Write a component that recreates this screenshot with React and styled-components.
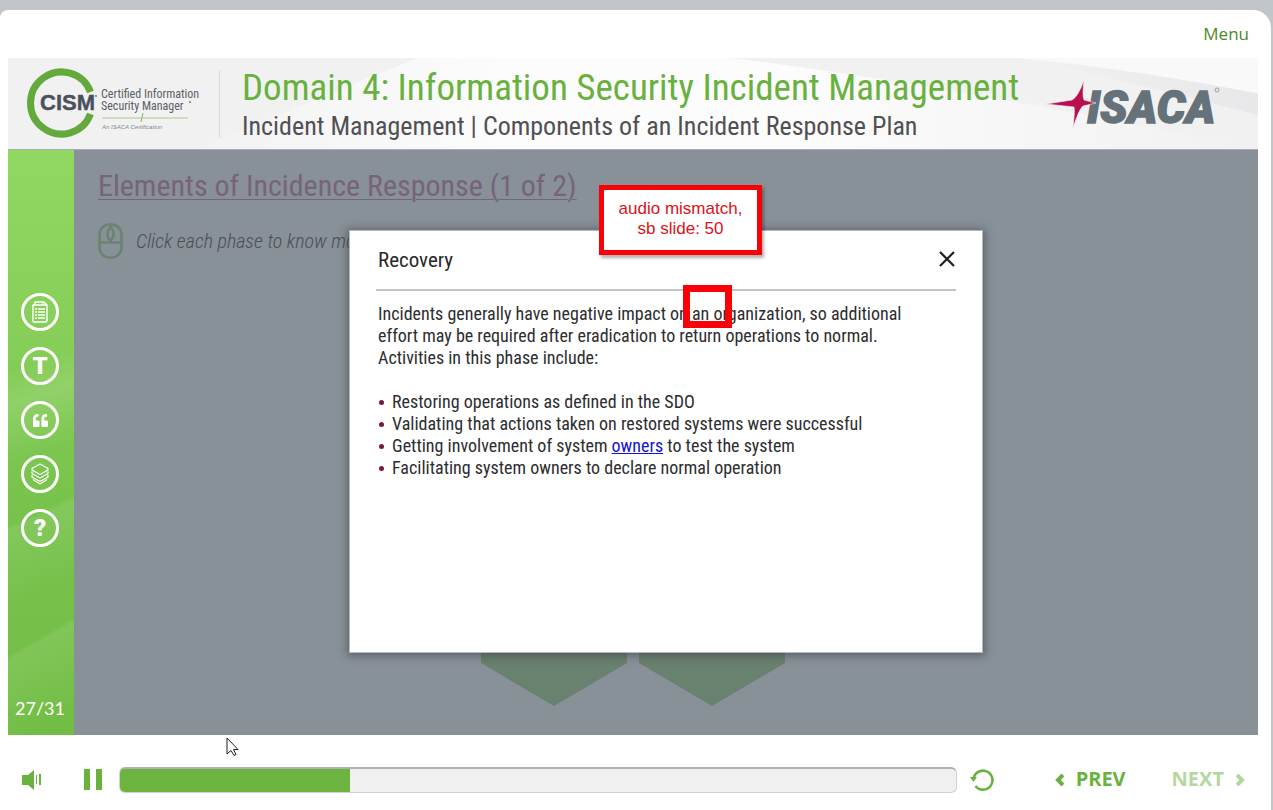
import React from "react";
import styled, { createGlobalStyle } from "styled-components";
import { FaQuoteLeft } from "react-icons/fa";

const GlobalStyle = createGlobalStyle`
  * { box-sizing: border-box; }
  body { margin: 0; background: #c1c6ca; font-family: "Roboto Condensed", "Arial Narrow", Roboto, sans-serif; }
  h1, h2, h3, p, ul { margin: 0; padding: 0; font-weight: 400; }
  button { border: 0; padding: 0; background: none; color: inherit; font: inherit; cursor: pointer; display: flex; align-items: center; justify-content: center; }
`;

const Player = styled.div`
  display: flex;
  flex-direction: column;
  min-height: calc(100vh - 10px);
  margin: 10px 2px 0 0;
  background: #fff;
  border-radius: 8px 18px 0 0;
  position: relative;
`;

const TopBar = styled.nav`
  height: 48px;
  display: flex;
  justify-content: flex-end;
  align-items: center;
  padding: 0 22px;
`;

const MenuLink = styled.a`
  font: 17px/24px "Open Sans", sans-serif;
  color: #4c8a2c;
  text-decoration: none;
`;

const Slide = styled.section`
  flex: 1;
  margin: 0 13px 0 8px;
  display: flex;
  flex-direction: column;
`;

const Banner = styled.header`
  height: 92px;
  display: flex;
  align-items: center;
  position: relative;
  background: #f1f1f2;
  border-bottom: 1px solid #a9abb5;
`;

const Swoosh = styled.svg`
  position: absolute;
  inset: 0;
  width: 100%;
  height: 100%;
`;

const CismLogo = styled.svg`
  position: relative;
  flex: none;
  width: 212px;
  height: 91px;
`;

const Titles = styled.div`
  position: relative;
  flex: 1;
  padding: 4px 0 0 22px;
  white-space: nowrap;
`;

const CourseTitle = styled.h1`
  font-size: 37px;
  line-height: 40px;
  color: #68b13f;
`;

const TopicTitle = styled.h2`
  font-size: 26px;
  line-height: 36px;
  color: #505052;
`;

const IsacaLogo = styled.svg`
  position: relative;
  flex: none;
  width: 180px;
  height: 60px;
  margin-right: 32px;
`;

const Content = styled.div`
  flex: 1;
  display: flex;
`;

const Sidebar = styled.aside`
  width: 66px;
  display: flex;
  flex-direction: column;
  align-items: center;
  padding: 143px 2px 14px 0;
  color: #fff;
  background:
    linear-gradient(150deg, transparent 81%, #ffffff18 82%, transparent 96%),
    linear-gradient(155deg, transparent 61%, #ffffff18 62%, transparent 75%),
    linear-gradient(160deg, transparent 36%, #ffffff20 42%, transparent 52%),
    linear-gradient(#90d862, #87cf58 30%, #77c34c 60%, #72bd45);
`;

const ToolList = styled.div`
  display: flex;
  flex-direction: column;
  gap: 16px;
`;

const ToolButton = styled.button`
  width: 38px;
  height: 38px;
  && { border: 3px solid #fff; }
  border-radius: 50%;
  && { font: 900 24px/32px Roboto, sans-serif; }
`;

const PageCount = styled.span`
  margin-top: auto;
  font: 18px/26px Lato, sans-serif;
`;

const Stage = styled.main`
  flex: 1;
  position: relative;
  display: flex;
  flex-direction: column;
  background: #889098;
  padding: 20px 24px 29px;
`;

const SlideTitle = styled.h2`
  font-size: 30px;
  line-height: 32px;
  color: #776477;
  text-decoration: underline;
  text-decoration-thickness: 1px;
  text-underline-offset: 3px;
`;

const Prompt = styled.p`
  display: flex;
  align-items: center;
  gap: 13px;
  margin-top: 21px;
  font-size: 20px;
  font-weight: 300;
  line-height: 36px;
  font-style: italic;
  color: #4b4f56;
`;

const Phases = styled.div`
  margin-top: auto;
  display: flex;
  justify-content: center;
  gap: 12px;
  padding-right: 66px;
`;

const Backdrop = styled.div`
  position: absolute;
  inset: 0;
  display: grid;
  place-items: center;
`;

const Dialog = styled.div`
  position: relative;
  width: 634px;
  height: 423px;
  margin-bottom: 2px;
  padding: 16px 26px;
  background: #fff;
  border: 1px solid #b4b9bd;
  box-shadow: 0 1px 8px 2px #33383d80;
`;

const DialogHead = styled.header`
  display: flex;
  justify-content: space-between;
  align-items: center;
  height: 44px;
  padding: 0 0 16px 2px;
  border-bottom: 2px solid #c4c4c6;
`;

const DialogTitle = styled.h3`
  font-size: 21px;
  line-height: 26px;
  color: #29292b;
`;

const CloseButton = styled.button`
  width: 18px;
  height: 18px;
`;

const DialogText = styled.div`
  max-width: 544px;
  padding: 12px 2px;
  font-size: 18px;
  line-height: 22px;
  color: #2d2d2f;
`;

const Bullets = styled.ul`
  margin-top: 22px;
  list-style: none;
`;

const Bullet = styled.li`
  display: flex;
  align-items: center;
  gap: 8px;
  &::before {
    content: "";
    width: 5px;
    height: 5px;
    margin-left: 1px;
    border-radius: 50%;
    background: #7c1740;
  }
  a { color: #1212d6; }
`;

const Callout = styled.div`
  position: absolute;
  left: 249px;
  top: -46px;
  width: 163px;
  height: 70px;
  border: 5px solid #fb0007;
  background: #fff;
  box-shadow: 2px 3px 3px #00000050;
  padding-top: 9px;
  text-align: center;
  font: 17px/20px "Liberation Sans", sans-serif;
  color: #dd1118;
`;

const Highlight = styled.div`
  position: absolute;
  left: 333px;
  top: 54px;
  width: 49px;
  height: 43px;
  border: 7px solid #fb0007;
`;

const Controls = styled.footer`
  height: 75px;
  display: flex;
  align-items: center;
  padding: 14px 25px 0 22px;
  color: #69b23f;
`;

const IconButton = styled.button`
  flex: none;
  width: ${(p) => p.$width}px;
  height: 26px;
  && { justify-content: flex-start; }
`;

const SeekBar = styled.input`
  appearance: none;
  flex: 1;
  min-width: 0;
  height: 26px;
  margin: 0 13px 0 0;
  border: 1px solid #d2d2d2;
  border-top: 2px solid #b0b0b0;
  border-radius: 6px;
  background: linear-gradient(90deg, #6cb33f ${(p) => p.value}%, #f0f0f0 ${(p) => p.value}%);
  &::-webkit-slider-thumb { appearance: none; width: 1px; height: 1px; opacity: 0; }
`;

const NavButton = styled.button`
  && {
    font: 700 20px/24px "Open Sans", sans-serif;
    padding-bottom: 2px;
    color: #69b23f;
  }
  gap: 12px;
  margin-left: ${(p) => p.$space}px;
  opacity: ${(p) => (p.disabled ? 0.5 : 1)};
`;

const Pointer = styled.svg`
  position: absolute;
  left: 226px;
  bottom: 53px;
  pointer-events: none;
`;

const Chevron = ({ next }) => (
  <svg width="10" height="16" viewBox="0 0 10 16" fill="none" stroke="currentColor" strokeWidth="4">
    <path d={next ? "M1 4l5 5-5 5" : "M9 4L4 9l5 5"} />
  </svg>
);

const DocIcon = () => (
  <svg width="18" height="22" viewBox="0 0 18 22" fill="none" stroke="#fff">
    <path d="M2 4h2V1h9l3 3v15q0 2-2 2H3q-1 0-1-1zM4 4h8V1M12 4h4" strokeWidth="1.4" />
    <path d="M4 8h2m1 0h7M4 11h2m1 0h7M4 14h2m1 0h7M4 17h2m1 0h7" strokeWidth="1.5" />
  </svg>
);

const LayersIcon = () => (
  <svg width="20" height="22" viewBox="0 0 20 22" fill="none" stroke="#fff" strokeWidth="1.2" strokeLinejoin="round">
    <path d="M10 1l8 4.500v1.500l-8 4.500L2 7V5.500z" />
    <path d="M2 8.500v2l8 4.500 8-4.500v-2M2 12v2l8 4.500 8-4.500v-2M3 16.500L10 21l7-4.500" />
  </svg>
);

const MouseIcon = () => (
  <svg width="25" height="36" viewBox="0 0 25 36" fill="none" stroke="#6b8371" strokeWidth="2.600">
    <rect x="1.500" y="1.500" width="22" height="33" rx="10" />
    <path d="M1.500 19.500h22M12.500 1.500v4M12.500 16v3" />
    <ellipse cx="12.500" cy="11" rx="3" ry="5.500" />
  </svg>
);

const Hexagon = () => (
  <svg width="146" height="170" viewBox="0 0 146 170">
    <path d="M73 0l73 43v84l-73 43L0 127V43z" fill="#69816f" />
  </svg>
);

export default function App() {
  const [progress, setProgress] = React.useState(27.5);
  return (
    <Player>
      <GlobalStyle />
      <TopBar><MenuLink href="#menu">Menu</MenuLink></TopBar>
      <Slide>
        <Banner>
          <Swoosh viewBox="0 0 1250 92" preserveAspectRatio="none" aria-hidden="true">
            <defs>
              <linearGradient id="sheen">
                <stop offset="0" stopColor="#fff" stopOpacity=".1" />
                <stop offset=".3" stopColor="#fff" stopOpacity=".8" />
                <stop offset=".55" stopColor="#fff" stopOpacity=".8" />
                <stop offset="1" stopColor="#fff" stopOpacity="0" />
              </linearGradient>
              <linearGradient id="fold">
                <stop offset="0" stopColor="#e8e8ea" stopOpacity="0" />
                <stop offset="1" stopColor="#e8e8ea" />
              </linearGradient>
            </defs>
            <path d="M190 92Q310 40 410 0H720Q900 20 1250 92z" fill="url(#sheen)" />
            <path d="M1010 0Q1130 12 1250 36V0z" fill="#f9f9fa" />
            <path d="M1020 0Q1140 14 1250 36V58Q1130 26 1020 0z" fill="url(#fold)" />
          </Swoosh>
          <CismLogo viewBox="0 0 212 91" role="img" aria-label="CISM Certified Information Security Manager">
            <path d="M82.500 34A31 31 0 1 0 82.500 56" fill="none" stroke="#64a93b" strokeWidth="7" />
            <text x="32" y="52" fontFamily="Liberation Sans" fontWeight="700" fontSize="22" fill="#48505c" stroke="#48505c" strokeWidth=".4">CISM</text>
            <g fontFamily="Roboto Condensed, Roboto, sans-serif" fontSize="12" fill="#5c6067">
              <text x="93" y="40">Certified Information</text>
              <text x="93" y="52">Security Manager</text>
            </g>
            <circle cx="88" cy="38" r="1" fill="#777" />
            <circle cx="182" cy="44" r="1" fill="#777" />
            <path d="M94 60h86" stroke="#a9cb94" />
            <path d="M135 55l-2 9" stroke="#82b664" />
            <text x="94" y="71" fontFamily="Liberation Sans" fontSize="6" fontStyle="italic" fill="#85878b">An ISACA Certification</text>
            <path d="M211.500 12v68" stroke="#dcdcde" />
          </CismLogo>
          <Titles>
            <CourseTitle>Domain 4: Information Security Incident Management</CourseTitle>
            <TopicTitle>Incident Management | Components of an Incident Response Plan</TopicTitle>
          </Titles>
          <IsacaLogo viewBox="0 0 180 60" role="img" aria-label="ISACA">
            <text x="41" y="49" fontFamily="Roboto, sans-serif" fontSize="45" fontWeight="900" fontStyle="italic" fill="#65727a" stroke="#65727a" strokeWidth="1.500">ISACA</text>
            <path d="M0 30L26 26Q32 23 38 6Q36 22 38 26L50 29L37 32Q33 35 27 54Q29 36 28 33z" fill="#b90f50" stroke="#f5f5f6" strokeWidth=".6" />
            <circle cx="171" cy="16" r="2" fill="none" stroke="#9a9fa4" />
          </IsacaLogo>
        </Banner>
        <Content>
          <Sidebar>
            <ToolList>
              <ToolButton aria-label="Transcript"><DocIcon /></ToolButton>
              <ToolButton aria-label="Text">T</ToolButton>
              <ToolButton aria-label="Glossary"><FaQuoteLeft size={15} /></ToolButton>
              <ToolButton aria-label="Resources"><LayersIcon /></ToolButton>
              <ToolButton aria-label="Help">?</ToolButton>
            </ToolList>
            <PageCount>27/31</PageCount>
          </Sidebar>
          <Stage>
            <SlideTitle>Elements of Incidence Response (1 of 2)</SlideTitle>
            <Prompt><MouseIcon />Click each phase to know more.</Prompt>
            <Phases><Hexagon /><Hexagon /></Phases>
            <Backdrop>
              <Dialog role="dialog" aria-labelledby="phase-title">
                <DialogHead>
                  <DialogTitle id="phase-title">Recovery</DialogTitle>
                  <CloseButton aria-label="Close">
                    <svg width="18" height="18" viewBox="0 0 18 18" stroke="#202022" strokeWidth="2.200">
                      <path d="M2 1l14 14M16 1L2 15" />
                    </svg>
                  </CloseButton>
                </DialogHead>
                <DialogText>
                  <p>Incidents generally have negative impact on an organization, so additional effort may be required after eradication to return operations to normal. Activities in this phase include:</p>
                  <Bullets>
                    <Bullet>Restoring operations as defined in the SDO</Bullet>
                    <Bullet>Validating that actions taken on restored systems were successful</Bullet>
                    <Bullet><span>Getting involvement of system <a href="#owners">owners</a> to test the system</span></Bullet>
                    <Bullet>Facilitating system owners to declare normal operation</Bullet>
                  </Bullets>
                </DialogText>
                <Callout>audio mismatch,<br />sb slide: 50</Callout>
                <Highlight />
              </Dialog>
            </Backdrop>
          </Stage>
        </Content>
      </Slide>
      <Controls>
        <IconButton $width={62} aria-label="Volume">
          <svg width="20" height="20" viewBox="0 0 20 20" fill="currentColor">
            <path d="M0 5h6l6-5v20l-6-5H0zM14 5h1v9h-1zM17 4h2v11h-2z" />
          </svg>
        </IconButton>
        <IconButton $width={35} aria-label="Pause">
          <svg width="18" height="21" viewBox="0 0 18 21" fill="currentColor"><path d="M0 0h6v21H0zM12 0h6v21h-6z" /></svg>
        </IconButton>
        <SeekBar type="range" min="0" max="100" step="0.5" value={progress} onChange={(e) => setProgress(Number(e.target.value))} aria-label="Seek" />
        <IconButton $width={24} aria-label="Replay">
          <svg width="24" height="24" viewBox="0 0 24 24" fill="none" stroke="currentColor" strokeWidth="2.600">
            <path d="M3.500 12A9.500 9.500 0 1 1 5.500 18" />
            <path d="M0 9h7l-3.500 5z" fill="currentColor" stroke="none" />
          </svg>
        </IconButton>
        <NavButton $space={60}><Chevron />PREV</NavButton>
        <NavButton $space={46} disabled>NEXT<Chevron next /></NavButton>
      </Controls>
      <Pointer width="13" height="20" viewBox="0 0 13 20" fill="#fff" stroke="#1d1d25">
        <path d="M1 1v16l4-3.500 3 5 2-1-2.500-5H12z" />
      </Pointer>
    </Player>
  );
}
